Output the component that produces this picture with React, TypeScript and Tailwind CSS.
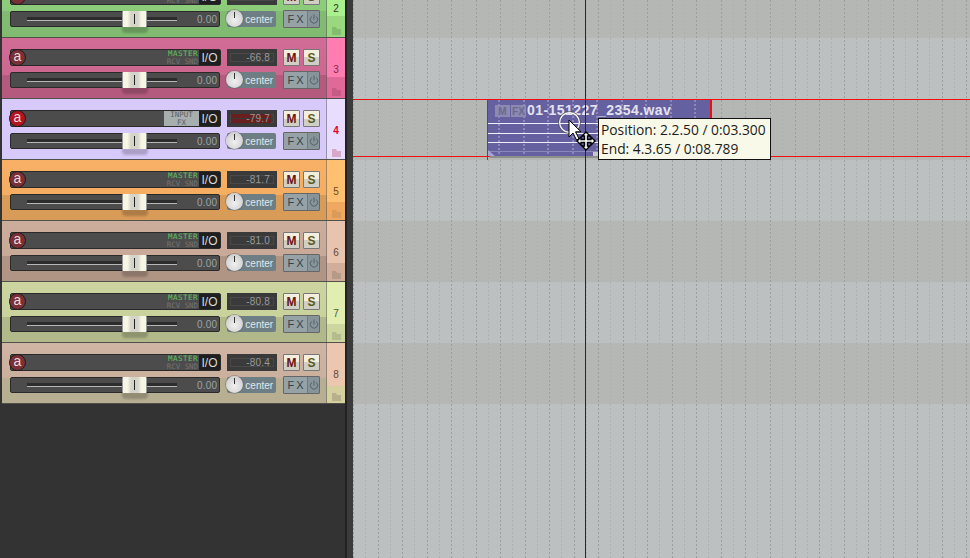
import React from "react";
import { Power } from "lucide-react";

const tracks = [
  { n: "2", bg: "bg-[linear-gradient(#90cf7e_0%,#8ccb7a_56%,#81bb71_56%,#81bb71_100%)]", num: "bg-[linear-gradient(#aaf08c_0%,#aaf08c_65%,#9ad880_65%,#9ad880_100%)]", text: "text-[#333]", fold: "text-[#82bd70]", db: "" },
  { n: "3", bg: "bg-[linear-gradient(#d06c95_0%,#cc6790_62%,#b45a7e_62%,#b45a7e_100%)]", num: "bg-[linear-gradient(#ff7db1_0%,#ff7db1_65%,#e0699a_65%,#e0699a_100%)]", text: "text-[#7a2c4c]", fold: "text-[#c85b85]", db: "-66.8" },
  { n: "4", bg: "bg-[#d8c9fb]", num: "bg-[#e8dcff]", text: "text-[#e8002c] font-bold", fold: "text-[#d8a8c8]", db: "-79.7", sel: true },
  { n: "5", bg: "bg-[linear-gradient(#f8b066_0%,#f5ad62_58%,#d99b58_58%,#d99b58_100%)]", num: "bg-[linear-gradient(#ffc16f_0%,#ffc16f_70%,#f0a860_70%,#f0a860_100%)]", text: "text-[#6e4a22]", fold: "text-[#d99a5a]", db: "-81.7" },
  { n: "6", bg: "bg-[linear-gradient(#ccac9a_0%,#c9a997_58%,#b09484_58%,#b09484_100%)]", num: "bg-[linear-gradient(#e8c3ae_0%,#e8c3ae_70%,#d2ae9a_70%,#d2ae9a_100%)]", text: "text-[#5e4a40]", fold: "text-[#b69a88]", db: "-81.0" },
  { n: "7", bg: "bg-[linear-gradient(#ccd5a0_0%,#c9d29c_58%,#b1b98a_58%,#b1b98a_100%)]", num: "bg-[linear-gradient(#e2eeb0_0%,#e2eeb0_70%,#ccd69e_70%,#ccd69e_100%)]", text: "text-[#505838]", fold: "text-[#b4bc8c]", db: "-80.8" },
  { n: "8", bg: "bg-[linear-gradient(#d0b4a4_0%,#ccb09e_58%,#b8af92_58%,#b8af92_100%)]", num: "bg-[linear-gradient(#ecc6af_0%,#ecc6af_72%,#d6d09e_72%,#d6d09e_100%)]", text: "text-[#5e4a40]", fold: "text-[#b8b08c]", db: "-80.4" },
];

function Folder({ className }: { className: string }) {
  return (
    <svg width="9" height="8" viewBox="0 0 9 8" className={className}>
      <path d="M0 0h4l1 2h4v6H0z" fill="currentColor" />
    </svg>
  );
}

function Track({ t }: { t: (typeof tracks)[number] }) {
  return (
    <div className="flex h-[61px] shrink-0 border-b border-[#50504c]">
      <div className={`w-[325px] border-r border-[#5a5a5a]/50 ${t.bg} flex flex-col pl-2 pr-[6px] pt-[11px]`}>
        {/* top row */}
        <div className="flex h-[17px] items-stretch">
          <div className="relative flex h-[17px] w-[211px] items-stretch rounded-[2px] border border-[#2a2a2a] bg-[#4c4c4c]">
            <div className={`absolute -left-[2px] -top-px flex h-[17px] w-[17px] items-center justify-center rounded-full border-[1.5px] border-[#1c1c1c] ${t.sel ? "bg-[#b3151f]" : "bg-[#7a3035]"} font-['Liberation_Sans',sans-serif] text-[14px] leading-none text-[#eadada]`}>
              <span className="-mt-[3px]">a</span>
            </div>
            <div className="flex-1" />
            {t.sel ? (
              <div className="flex w-[35px] flex-col items-center justify-center bg-[#a7aeae] font-['DejaVu_Sans_Mono',monospace] text-[7.5px] leading-[7.5px] text-[#5a6262]">
                <span>INPUT</span>
                <span>FX</span>
              </div>
            ) : (
              <div className="flex w-[35px] flex-col items-end justify-center pr-px font-['DejaVu_Sans_Mono',monospace] text-[7.4px] leading-[7.5px]">
                <span className="text-[7.5px] tracking-[0.5px] text-[#62c262]">MASTER</span>
                <span className="text-[#747474]">RCV SND</span>
              </div>
            )}
            <div className="flex w-[21px] items-center justify-center bg-[#1f1f1f] font-['Liberation_Sans',sans-serif] text-[12px] text-[#d8d8d8]">
              I/O
            </div>
          </div>
          <div className="relative ml-[6px] flex h-[17px] w-[50px] items-center justify-end overflow-hidden bg-[#3a3a3a] pr-[7px]">
            <div className="absolute inset-x-[3px] inset-y-[4px] border border-[#494949]" />
            {t.sel && (
              <div className="absolute inset-x-[4px] inset-y-[4px] flex flex-col justify-between">
                <div className="h-[4px] w-[40px] bg-[#6a1f1f]" />
                <div className="h-[4px] w-[40px] bg-[#6a1f1f]" />
              </div>
            )}
            <span className="relative font-['Liberation_Sans',sans-serif] text-[10px] tracking-[0.2px] text-[#999]">{t.db}</span>
          </div>
          <div className="ml-[6px] flex h-[17px] w-[17px] items-center justify-center rounded-[1px] border border-[#777] bg-[linear-gradient(#f4eede_50%,#cfcfc6_50%)] font-['Liberation_Sans',sans-serif] text-[12px] font-bold text-[#6b1212]">M</div>
          <div className="ml-[3px] flex h-[17px] w-[17px] items-center justify-center rounded-[1px] border border-[#777] bg-[linear-gradient(#f4eede_50%,#cfcfc6_50%)] font-['Liberation_Sans',sans-serif] text-[12px] font-bold text-[#5a5a20]">S</div>
        </div>
        {/* bottom row */}
        <div className="mt-[5px] flex h-[18px] items-center">
          <div className="relative flex h-[16px] w-[211px] items-center rounded-[2px] border border-[#2a2a2a] bg-[#4c4c4c]">
            <div className="ml-[16px] flex h-[4px] w-[150px] flex-col justify-end bg-[#2c2c2c]">
              <div className="h-px bg-[#b8b8b8]" />
            </div>
            <div className="absolute left-[111px] top-[14px] h-[7px] w-[26px] rounded-b-[4px] bg-[#000]/20 blur-[1px]" />
            <div className="absolute left-[111px] -top-px flex h-[16px] w-[25px] items-center justify-center rounded-[1px] border-x border-[#999] bg-[linear-gradient(90deg,#f7f5e4_0%,#f7f5e4_20%,#d4d4c8_35%,#d4d4c8_65%,#f7f5e4_80%,#f7f5e4_100%)]">
              <div className="h-[10px] w-px bg-[#222]" />
            </div>
            <span className="ml-auto pr-[2px] font-['Liberation_Sans',sans-serif] text-[10px] tracking-[0.2px] text-[#9aa4a8]">0.00</span>
          </div>
          <div className="relative ml-[7px] flex h-[16px] w-[49px] items-center justify-end rounded-[2px] bg-[#6e7e85] pr-[3px]">
            <div className="absolute -left-px -top-px flex h-[17px] w-[17px] justify-center rounded-full bg-[radial-gradient(circle_at_50%_60%,#f0f0f0,#c4c4c4)] shadow-[0_0_0_1px_#5a5a5a66]">
              <div className="mt-[2px] h-[6px] w-px bg-[#333]" />
            </div>
            <span className="font-['Liberation_Sans',sans-serif] text-[10px] text-[#e0e8ea]">center</span>
          </div>
          <div className="ml-[7px] flex h-[18px] w-[37px] items-stretch overflow-hidden rounded-[1px] border border-[#666]">
            <div className="flex w-[23px] items-center justify-center bg-[#96a2a6] font-['Liberation_Sans',sans-serif] text-[11px] text-[#34424a] [word-spacing:-1px]">F X</div>
            <div className="flex flex-1 items-center justify-center border-l border-[#6f7b80] bg-[#87949a]">
              <Power size={10} strokeWidth={1.4} className="text-[#34424a]" />
            </div>
          </div>
        </div>
      </div>
      <div className={`flex w-[18px] flex-col items-center justify-end ${t.num}`}>
        <span className={`mb-[13px] font-['Liberation_Sans',sans-serif] text-[10px] leading-none ${t.text}`}>{t.n}</span>
        <Folder className={`mb-[2px] ${t.fold}`} />
      </div>
    </div>
  );
}

const Band = ({ className }: { className: string }) => <div className={`h-[61px] shrink-0 ${className}`} />;

const darkRows = [[0, 38], [99, 160], [221, 282], [343, 404]];
const lightRows = [[38, 99], [160, 221], [282, 343], [404, 558]];

export default function App() {
  const major = Array.from({ length: 26 }, (_, i) => Math.round(353 + i * 24.53));
  const minor = major.map((x) => Math.round(x + 12.26));
  return (
    <div className="relative flex h-[558px] w-[970px] overflow-hidden bg-[#bcc0c0] font-['Liberation_Sans',sans-serif]">
      {/* left panel */}
      <div className="flex h-full w-[345px] shrink-0 flex-col overflow-hidden bg-[#333] pl-[2px]">
        <div className="-mt-[23px] flex flex-col">
          {tracks.map((t) => (
            <Track key={t.n} t={t} />
          ))}
        </div>
      </div>
      {/* divider */}
      <div className="h-full w-[2px] shrink-0 bg-[#222]" />
      <div className="h-full w-[6px] shrink-0 bg-[#3b3b3b]" />
      {/* arrange */}
      <div className="relative h-full flex-1">
        <div className="-mt-[23px] flex flex-col">
          <Band className="bg-[#b5b7b5]" />
          <Band className="bg-[#bcc0c0]" />
          <Band className="bg-[#b5b7b5]" />
          <Band className="bg-[#bcc0c0]" />
          <Band className="bg-[#b5b7b5]" />
          <Band className="bg-[#bcc0c0]" />
          <Band className="bg-[#b5b7b5]" />
        </div>
      </div>

      {/* grid lines */}
      <svg className="pointer-events-none absolute inset-0" width="970" height="558">
        {major.map((x) => (
          <line key={x} x1={x + 0.5} x2={x + 0.5} y1="0" y2="558" stroke="#9c9e9e" strokeDasharray="2 2" />
        ))}
        {minor.map((x) =>
          lightRows.map(([a, b]) => (
            <line key={`l${x}-${a}`} x1={x + 0.5} x2={x + 0.5} y1={a} y2={b} stroke="#aeb1b1" strokeDasharray="2 2" />
          ))
        )}
        {minor.map((x) =>
          darkRows.map(([a, b]) => (
            <line key={`d${x}-${a}`} x1={x + 0.5} x2={x + 0.5} y1={a} y2={b} stroke="#acaeac" strokeDasharray="2 2" opacity="0.6" />
          ))
        )}
      </svg>

      {/* selected track lines */}
      <div className="absolute left-[353px] right-0 top-[99px] h-px bg-[#f01010]" />
      <div className="absolute left-[353px] right-0 top-[156px] h-px bg-[#f01010]" />

      {/* media item */}
      <div className="absolute left-[488px] top-[100px] h-[56px] w-[222px] bg-[#65609f] shadow-[2px_2px_0_#8e8e8e]">
        <svg className="absolute inset-0" width="222" height="56">
          {[11, 36, 60, 85, 109, 134, 158, 183, 207].map((x) => (
            <line key={x} x1={x} x2={x} y1="0" y2="56" stroke="#cfcfe6" strokeDasharray="2 2" opacity="0.75" />
          ))}
          {[23.5, 33.5, 42.5].map((y) => (
            <line key={y} x1="0" x2="222" y1={y} y2={y} stroke="#f0eef8" />
          ))}
          <line x1="0" x2="222" y1="51.5" y2="51.5" stroke="#8b87b8" />
          <path d="M0 50l7 6H0z" fill="#a8a4d8" />
          <rect x="105" y="52" width="6" height="4" fill="#c8c8c8" />
        </svg>
        <div className="absolute left-[7px] top-[5px] flex items-center gap-px">
          <span className="flex h-[12px] w-[15px] items-center justify-center bg-[#8c89b2] text-[10px] font-bold text-[#6a6890]">M</span>
          <span className="flex h-[12px] w-[15px] items-center justify-center bg-[#8c89b2] text-[10px] font-bold text-[#6a6890]">FX</span>
        </div>
        <span className="absolute left-[39px] top-0 whitespace-nowrap text-[14px] font-bold tracking-[0.45px] text-[#e3e2ef]">01-151227_2354.wav</span>
      </div>
      <div className="absolute left-[487px] top-[99px] h-[61px] w-px bg-[#e81010]" />
      <div className="absolute left-[710px] top-[99px] h-[58px] w-[2px] bg-[#e81010]" />

      {/* edit cursor */}
      <div className="absolute bottom-0 left-[585px] top-0 w-px bg-[#2c2626]" />

      {/* cursor */}
      <svg className="absolute left-[555px] top-[108px]" width="46" height="56" viewBox="0 0 46 56">
        <circle cx="14.5" cy="14.5" r="10" fill="none" stroke="#f4f4f4" strokeWidth="1.5" />
        <circle cx="14.5" cy="14.5" r="11" fill="none" stroke="#333" strokeWidth="0.6" />
        <path d="M14 12v17l4-4 3.5 7 2.5-1.2-3.5-7H26z" fill="#fff" stroke="#000" strokeWidth="1" />
        <path d="M31 24l4 4h-2.5v3.5h3.5V29l4 4-4 4v-2.5h-3.5V38h2.5l-4 4-4-4h2.5v-3.5h-3.5V37l-4-4 4-4v2.5h3.5V28h-2.5z" fill="#fff" stroke="#000" strokeWidth="1.4" />
      </svg>

      {/* tooltip */}
      <div className="absolute left-[598px] top-[118px] flex h-[42px] w-[173px] flex-col justify-center border border-[#111] bg-[#f9f9e9] pl-[2px] font-['Open_Sans',sans-serif] text-[13.8px] leading-[19px] text-[#1c1c1c]">
        <span className="whitespace-nowrap">Position: 2.2.50 / 0:03.300</span>
        <span className="whitespace-nowrap">End: 4.3.65 / 0:08.789</span>
      </div>
    </div>
  );
}
